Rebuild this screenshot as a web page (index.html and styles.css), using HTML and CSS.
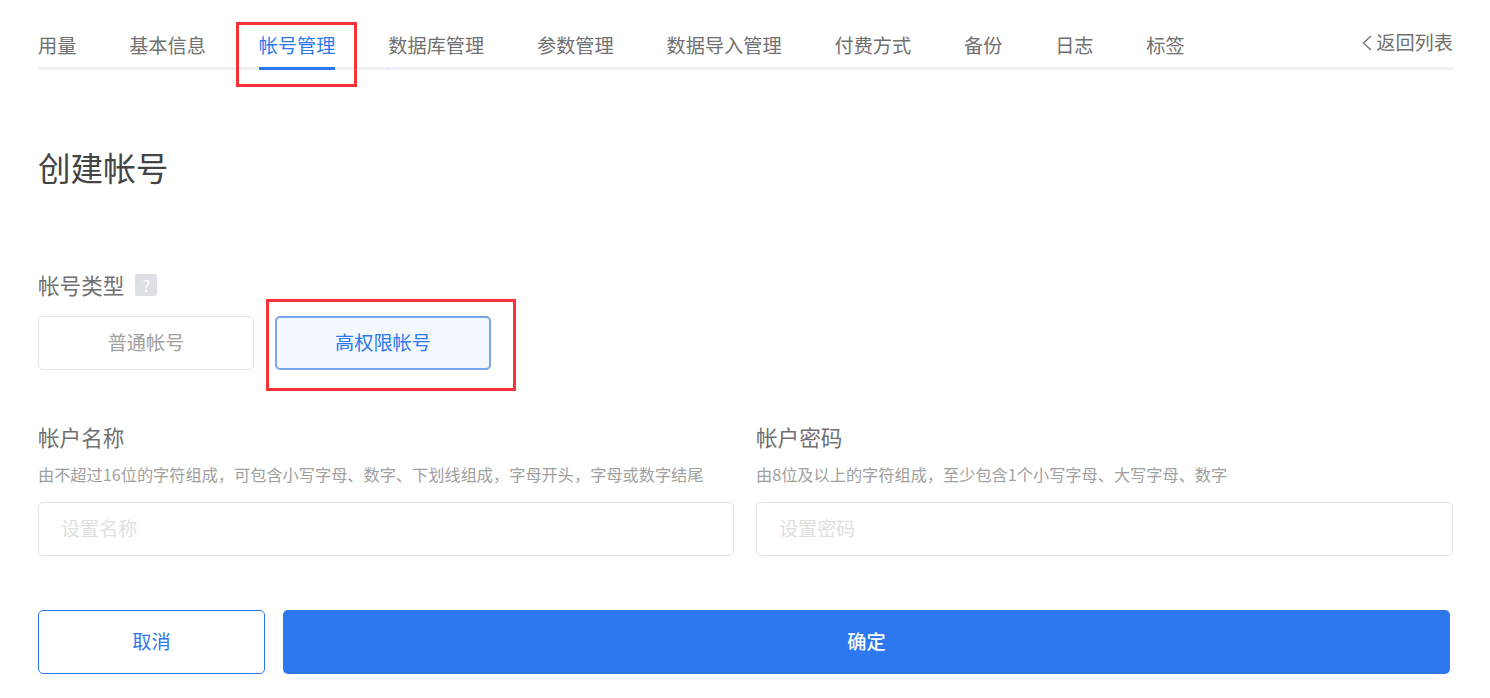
FILE: index.html
```html
<!DOCTYPE html>
<html lang="zh-CN">
  <head>
    <meta charset="UTF-8" />
    <title>创建帐号</title>
    <link rel="stylesheet" href="styles.css">
  </head>
  <body>
    <div class="page">
      <div class="nav">
        <div class="tabs">
          <a class="tab">用量</a>
          <a class="tab">基本信息</a>
          <a class="tab active">帐号管理</a>
          <a class="tab">数据库管理</a>
          <a class="tab">参数管理</a>
          <a class="tab">数据导入管理</a>
          <a class="tab">付费方式</a>
          <a class="tab">备份</a>
          <a class="tab">日志</a>
          <a class="tab">标签</a>
        </div>
        <a class="back">
          <svg width="12" height="18" viewBox="0 0 12 18" fill="none" stroke="#777" stroke-width="1.4">
            <path d="M10 3 L2.5 10 L10 17" />
          </svg>
          返回列表
        </a>
      </div>

      <h1 class="title">创建帐号</h1>

      <div class="type-label">
        帐号类型
        <span class="help">?</span>
      </div>
      <div class="types">
        <div class="type">普通帐号</div>
        <div class="type selected">高权限帐号</div>
      </div>

      <div class="fields">
        <div class="field">
          <div class="field-name">帐户名称</div>
          <div class="field-hint">由不超过16位的字符组成，可包含小写字母、数字、下划线组成，字母开头，字母或数字结尾</div>
          <input class="input" type="text" placeholder="设置名称" />
        </div>
        <div class="field">
          <div class="field-name">帐户密码</div>
          <div class="field-hint">由8位及以上的字符组成，至少包含1个小写字母、大写字母、数字</div>
          <input class="input" type="text" placeholder="设置密码" />
        </div>
      </div>

      <div class="actions">
        <button class="btn btn-cancel">取消</button>
        <button class="btn btn-ok">确定</button>
      </div>
    </div>

    <!-- red marks drawn over the screenshot -->
    <div class="mark mark-tab"></div>
    <div class="mark mark-type"></div>
  </body>
</html>
```

FILE: styles.css
```css
* {
  margin: 0;
  padding: 0;
  box-sizing: border-box;
}

body {
  position: relative;
  height: 698px;
  overflow: hidden;
  background: #fff;
  font-family: "Noto Sans CJK SC", "Liberation Sans", sans-serif;
  color: #707070;
}

.page {
  padding: 0 37px 0 38px;
}

/* Top tabs */
.nav {
  display: flex;
  justify-content: space-between;
  height: 70px;
  border-bottom: 3px solid #eff0f2;
}

.tabs {
  display: flex;
  gap: 52.8px;
}

.tab {
  position: relative;
  height: 70px;
  padding-top: 31px;
  font-size: 19.2px;
  line-height: 28px;
  color: #707070;
}

.tab.active {
  color: #2d78ee;
  border-bottom: 3px solid #2d78ee;
}

.tab.active + .tab::before {
  content: "";
  position: absolute;
  left: 0;
  top: 67px;
  width: 1px;
  height: 3px;
  background: #cfe0f8;
}

.back {
  display: flex;
  align-items: center;
  gap: 3px;
  height: 28px;
  margin-top: 28px;
  font-size: 19.2px;
  line-height: 28px;
  color: #707070;
}

.title {
  margin-top: 74px;
  font-size: 32.6px;
  font-weight: 400;
  line-height: 46px;
  color: #444;
}

/* Account type */
.type-label {
  display: flex;
  align-items: center;
  gap: 11px;
  margin-top: 80px;
  font-size: 21.6px;
  line-height: 30px;
  color: #707070;
}

.help {
  width: 22px;
  height: 22px;
  border-radius: 2px;
  background: #dcdfe6;
  color: #fff;
  font-size: 16px;
  line-height: 22px;
  text-align: center;
}

.types {
  display: flex;
  gap: 21px;
  margin-top: 16px;
}

.type {
  width: 216px;
  height: 54px;
  border: 1px solid #e1e2e6;
  border-radius: 5px;
  font-size: 19.2px;
  line-height: 50px;
  text-align: center;
  color: #a0a0a0;
}

.type.selected {
  border: 2px solid #78a5f0;
  background: #f3f7fe;
  line-height: 48px;
  color: #2d78ee;
}

/* Name and password */
.fields {
  display: grid;
  grid-template-columns: 696px 1fr;
  gap: 22px;
  margin-top: 51px;
}

.field-name {
  font-size: 21.6px;
  line-height: 32px;
  color: #707070;
}

.field-hint {
  margin-top: 9px;
  font-size: 16.2px;
  line-height: 24px;
  color: #a0a0a0;
}

.input {
  display: block;
  width: 100%;
  height: 54px;
  margin-top: 16px;
  padding: 0 22px 2px;
  border: 1px solid #dfe1e6;
  border-radius: 5px;
  outline: none;
  font-family: inherit;
  font-size: 19.1px;
}

.input::placeholder {
  color: #e0e0e0;
}

/* Bottom buttons */
.actions {
  display: flex;
  gap: 18px;
  margin-top: 54px;
  padding-right: 3px;
}

.btn {
  height: 64px;
  padding-bottom: 2px;
  border-radius: 5px;
  font-family: inherit;
  font-size: 19.2px;
}

.btn-cancel {
  width: 227px;
  border: 1px solid #2d78ee;
  background: #fff;
  color: #2d78ee;
}

.btn-ok {
  flex: 1;
  border: none;
  background: #2d78ee;
  color: #fff;
  font-weight: 500;
}

.mark {
  position: absolute;
  border: 3px solid #fb3338;
}

.mark-tab {
  left: 236px;
  top: 22px;
  width: 121px;
  height: 65px;
}

.mark-type {
  left: 266px;
  top: 299px;
  width: 250px;
  height: 92px;
}
```
